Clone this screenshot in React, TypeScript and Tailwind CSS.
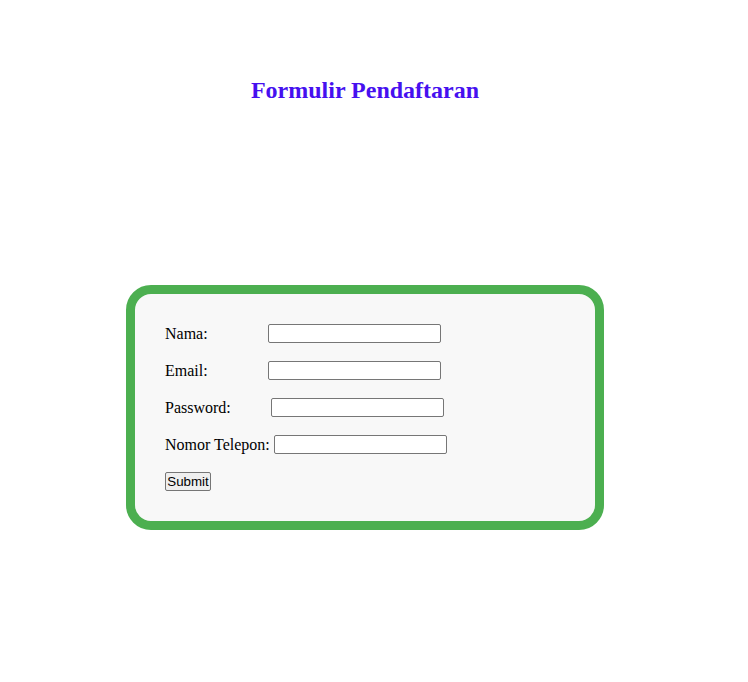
const fields = [
  { label: "Nama:", type: "text", width: "w-[103px]" },
  { label: "Email:", type: "email", width: "w-[103px]" },
  { label: "Password:", type: "password", width: "w-[106px]" },
  { label: "Nomor Telepon:", type: "tel", width: "w-[109px]" },
];

export default function App() {
  return (
    <div className="min-h-[682px] w-[730px] bg-white font-['Liberation_Serif',serif] text-black">
      <h2 className="pt-[76px] text-center text-[24px] leading-[28px] font-bold text-[#4610ef]">
        Formulir Pendaftaran
      </h2>
      <form className="mx-auto mt-[181px] w-[478px] rounded-[25px] border-[9px] border-[#4caf50] bg-[#f8f8f8] p-[30px]">
        <div className="flex flex-col gap-[18px]">
          {fields.map((f) => (
            <div key={f.label} className="flex h-[19px] items-center">
              <label className={`${f.width} shrink-0 whitespace-nowrap text-[16px] leading-[19px]`}>
                {f.label}
              </label>
              <input
                type={f.type}
                className="h-[19px] w-[173px] rounded-[2px] border border-[#767676] bg-white"
              />
            </div>
          ))}
          <div className="flex h-[19px]">
            <button
              type="button"
              className="h-[19px] w-[46px] rounded-[2px] border border-[#767676] bg-[#efefef] font-['Liberation_Sans',Arial,sans-serif] text-[13.33px] leading-[15px]"
            >
              Submit
            </button>
          </div>
        </div>
      </form>
    </div>
  );
}
